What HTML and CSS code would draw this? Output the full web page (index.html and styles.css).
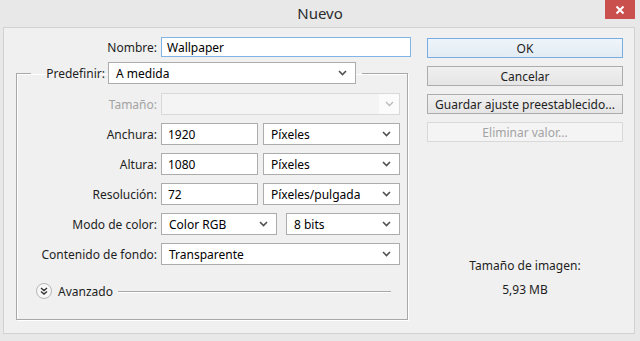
FILE: index.html
```html
<!DOCTYPE html>
<html lang="es">
<head>
  <meta charset="UTF-8">
  <title>Nuevo</title>
  <link rel="stylesheet" href="styles.css">
</head>
<body>

  <div class="window">
    <div class="titlebar">
      <div class="title">Nuevo</div>
      <div class="close-btn">
        <svg width="10" height="10" viewBox="0 0 10 10"><path d="M1.5 1.5 L8.5 8.5 M8.5 1.5 L1.5 8.5" stroke="#fff" stroke-width="2"/></svg>
      </div>
    </div>

    <div class="panel">
      <div class="left-col">
        <div class="name-row">
          <label class="name-label">Nombre:</label>
          <input type="text" class="name-input" value="Wallpaper">
        </div>

        <fieldset class="doc-box">
          <legend class="preset">
            <label class="preset-label">Predefinir:</label>
            <div class="combo preset-combo">
              <span>A medida</span>
              <svg class="chev" width="9" height="6" viewBox="0 0 9 6"><path d="M1 1 L4.5 4.5 L8 1" fill="none" stroke="#505050" stroke-width="1.6"/></svg>
            </div>
          </legend>

          <div class="row first-row">
            <label class="row-label disabled">Tamaño:</label>
            <div class="combo combo-disabled wide">
              <span></span>
              <span class="arrow-box">
                <svg class="chev" width="9" height="6" viewBox="0 0 9 6"><path d="M1 1 L4.5 4.5 L8 1" fill="none" stroke="#b8b8b8" stroke-width="1.3"/></svg>
              </span>
            </div>
          </div>

          <div class="row">
            <label class="row-label">Anchura:</label>
            <input type="text" class="num-input" value="1920">
            <div class="combo unit-combo">
              <span>Píxeles</span>
              <svg class="chev" width="9" height="6" viewBox="0 0 9 6"><path d="M1 1 L4.5 4.5 L8 1" fill="none" stroke="#505050" stroke-width="1.6"/></svg>
            </div>
          </div>

          <div class="row">
            <label class="row-label">Altura:</label>
            <input type="text" class="num-input" value="1080">
            <div class="combo unit-combo">
              <span>Píxeles</span>
              <svg class="chev" width="9" height="6" viewBox="0 0 9 6"><path d="M1 1 L4.5 4.5 L8 1" fill="none" stroke="#505050" stroke-width="1.6"/></svg>
            </div>
          </div>

          <div class="row">
            <label class="row-label">Resolución:</label>
            <input type="text" class="num-input" value="72">
            <div class="combo unit-combo">
              <span>Píxeles/pulgada</span>
              <svg class="chev" width="9" height="6" viewBox="0 0 9 6"><path d="M1 1 L4.5 4.5 L8 1" fill="none" stroke="#505050" stroke-width="1.6"/></svg>
            </div>
          </div>

          <div class="row">
            <label class="row-label">Modo de color:</label>
            <div class="combo mode-combo">
              <span>Color RGB</span>
              <svg class="chev" width="9" height="6" viewBox="0 0 9 6"><path d="M1 1 L4.5 4.5 L8 1" fill="none" stroke="#505050" stroke-width="1.6"/></svg>
            </div>
            <div class="combo bits-combo">
              <span>8 bits</span>
              <svg class="chev" width="9" height="6" viewBox="0 0 9 6"><path d="M1 1 L4.5 4.5 L8 1" fill="none" stroke="#505050" stroke-width="1.6"/></svg>
            </div>
          </div>

          <div class="row">
            <label class="row-label">Contenido de fondo:</label>
            <div class="combo wide">
              <span>Transparente</span>
              <svg class="chev" width="9" height="6" viewBox="0 0 9 6"><path d="M1 1 L4.5 4.5 L8 1" fill="none" stroke="#505050" stroke-width="1.6"/></svg>
            </div>
          </div>

          <div class="advanced">
            <span class="adv-icon">
              <svg width="16" height="16" viewBox="0 0 16 16">
                <circle cx="8" cy="8" r="7.5" fill="#f7f7f7" stroke="#b5b5b5"/>
                <path d="M5 5 L8 7.5 L11 5 M5 8.5 L8 11 L11 8.5" fill="none" stroke="#333" stroke-width="1.4"/>
              </svg>
            </span>
            <span class="adv-text">Avanzado</span>
            <span class="adv-line"></span>
          </div>
        </fieldset>
      </div>

      <div class="right-col">
        <button class="btn btn-default">OK</button>
        <button class="btn">Cancelar</button>
        <button class="btn">Guardar ajuste preestablecido...</button>
        <button class="btn" disabled>Eliminar valor...</button>

        <div class="image-size">
          <p>Tamaño de imagen:</p>
          <p>5,93 MB</p>
        </div>
      </div>
    </div>
  </div>

</body>
</html>
```

FILE: styles.css
```css
body {
  margin: 0;
  padding: 0;
  font-family: "Noto Sans", "Open Sans", sans-serif;
  font-size: 12px;
  color: #1e1e1e;
  background-color: #e8e8e8;
}

.window {
  width: 640px;
  height: 341px;
}

.titlebar {
  height: 27px;
  display: flex;
  justify-content: center;
  position: relative;
}

.title {
  font-size: 15px;
  color: #2b2b2b;
  line-height: 27px;
}

.close-btn {
  position: absolute;
  top: 0;
  right: 5px;
  width: 30px;
  height: 19px;
  background-color: #c9504c;
  display: flex;
  justify-content: center;
  align-items: center;
}

.panel {
  margin-left: 3px;
  width: 630px;
  height: 305px;
  border: 1px solid #d2d2d2;
  background-color: #f0f0f0;
  display: flex;
  box-sizing: content-box;
}

.left-col {
  width: 395px;
  padding: 9px 0 0 12px;
}

.name-row {
  display: flex;
  align-items: center;
  height: 20px;
}

.name-label {
  width: 141px;
  text-align: right;
  margin-right: 4px;
}

.name-input {
  width: 250px;
  height: 20px;
  box-sizing: border-box;
  border: 1px solid #7fb4e6;
  padding: 0 5px;
  font: inherit;
  color: #000;
  background: #fff;
  outline: none;
}

.doc-box {
  margin: 5px 0 0 0;
  padding: 0 0 20px 0;
  width: 392px;
  box-sizing: border-box;
  border: 1px solid #a8a8a8;
  box-shadow: inset 1px 1px 0 #fff, 1px 1px 0 #fff;
}

.preset {
  margin-left: 14px;
  padding: 0 6px 0 0;
  display: flex;
  align-items: center;
}

.preset-label {
  width: 74px;
  text-align: right;
  margin-right: 3px;
}

.combo {
  height: 22px;
  box-sizing: border-box;
  border: 1px solid #acacac;
  background: #fff;
  display: flex;
  align-items: center;
  justify-content: space-between;
  padding: 0 8px 0 7px;
  color: #000;
}

.preset-combo {
  width: 248px;
}

.row {
  display: flex;
  align-items: center;
  height: 22px;
  margin-top: 8px;
}

.first-row {
  margin-top: 9px;
}

.row-label {
  width: 140px;
  text-align: right;
  margin-right: 4px;
}

.row-label.disabled {
  color: #a3a3a3;
}

.wide {
  width: 239px;
}

.combo-disabled {
  background: #f4f4f4;
  border-color: #d9d9d9;
  padding: 0;
}

.arrow-box {
  width: 20px;
  height: 20px;
  background: #fbfbfb;
  display: flex;
  align-items: center;
  justify-content: center;
}

.num-input {
  width: 97px;
  height: 22px;
  box-sizing: border-box;
  border: 1px solid #acacac;
  padding: 0 6px;
  font: inherit;
  color: #000;
  background: #fff;
  margin-right: 5px;
}

.unit-combo {
  width: 137px;
}

.mode-combo {
  width: 116px;
  margin-right: 9px;
}

.bits-combo {
  width: 114px;
}

.advanced {
  display: flex;
  align-items: center;
  height: 16px;
  margin-top: 18px;
  padding-left: 19px;
  padding-right: 16px;
}

.adv-icon {
  display: flex;
  margin-right: 6px;
}

.adv-text {
  margin-right: 5px;
}

.adv-line {
  flex: 1;
  height: 1px;
  background-color: #a8a8a8;
  box-shadow: 0 1px 0 #fff;
}

.right-col {
  width: 196px;
  margin-left: 16px;
  padding-top: 10px;
  display: flex;
  flex-direction: column;
}

.btn {
  height: 20px;
  margin-bottom: 8px;
  padding: 0;
  font: inherit;
  color: #1e1e1e;
  border: 1px solid #acacac;
  background: linear-gradient(#f0f0f0, #e5e5e5);
}

.btn-default {
  border-color: #76aee3;
  background: linear-gradient(#eef4fa, #e3ebf3);
}

.btn:disabled {
  color: #a3a3a3;
  border-color: #d9d9d9;
  background: #f4f4f4;
}

.image-size {
  margin-top: 108px;
  text-align: center;
}

.image-size p {
  margin: 0 0 8px 0;
  line-height: 16px;
}
```
